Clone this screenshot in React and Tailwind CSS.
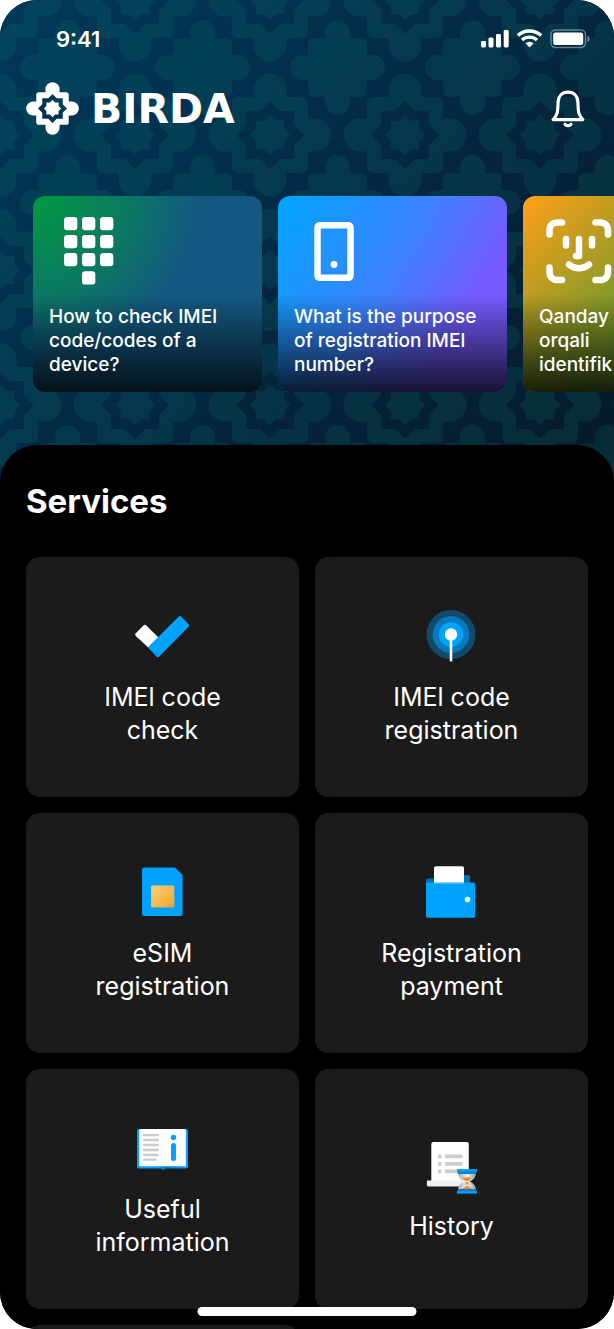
import React from 'react';

const lobedCross = (half, reach, lobe, r) => (
  <>
    <rect x={-half} y={-half} width={half * 2} height={half * 2} rx={r} />
    <rect x={-lobe} y={-reach} width={lobe * 2} height={reach * 2} rx={lobe} />
    <rect x={-reach} y={-lobe} width={reach * 2} height={lobe * 2} rx={lobe} />
  </>
);

const star = (half) => {
  const tip = half * Math.SQRT2;
  const inner = half * (Math.SQRT2 - 1);
  const pts = [
    [0, -tip], [inner, -half], [half, -half], [half, -inner],
    [tip, 0], [half, inner], [half, half], [inner, half],
    [0, tip], [-inner, half], [-half, half], [-half, inner],
    [-tip, 0], [-half, -inner], [-half, -half], [-inner, -half],
  ];
  return `M${pts.map((p) => p.join(' ')).join('L')}Z`;
};

// White ornament with the star cut out of the middle
const Ornament = ({ id }) => (
  <>
    <mask id={id} maskUnits="userSpaceOnUse" x="-64" y="-64" width="128" height="128">
      <g fill="#fff">{lobedCross(38, 61.5, 16.5, 6)}</g>
      <path d={star(24)} fill="#000" />
      <path d={star(14.3)} fill="#fff" />
    </mask>
    <rect x="-64" y="-64" width="128" height="128" mask={`url(#${id})`} />
  </>
);

const HeaderPattern = () => (
  <svg className="absolute inset-0 h-full w-full" aria-hidden="true">
    <defs>
      <pattern id="tiles" width="135" height="135" patternUnits="userSpaceOnUse">
        <g fill="#fff">
          <g transform="translate(67.5 67.5)">{lobedCross(29.3, 47.5, 12.5, 5)}</g>
          {[[0, 0], [135, 0], [0, 135], [135, 135]].map(([x, y]) => (
            <g key={`${x}-${y}`} transform={`translate(${x} ${y})`}>
              <Ornament id={`tile-${x}-${y}`} />
            </g>
          ))}
        </g>
      </pattern>
      <mask id="tiles-mask">
        <rect width="100%" height="100%" fill="url(#tiles)" />
      </mask>
    </defs>
    <rect width="100%" height="100%" fill="#109680" opacity="0.14" mask="url(#tiles-mask)" />
  </svg>
);

const StatusIcons = () => (
  <svg width="110" height="20" viewBox="0 0 110 20" fill="#fff" aria-hidden="true">
    <rect x="1" y="12" width="5" height="6.5" rx="1.4" />
    <rect x="8.5" y="8.5" width="5" height="10" rx="1.4" />
    <rect x="16" y="5" width="5" height="13.5" rx="1.4" />
    <rect x="23.7" y="1" width="5" height="17.5" rx="1.4" />
    <g fill="none" stroke="#fff" strokeWidth="3.4">
      <path d="M37.9 6.6a17 17 0 0 1 23.2 0" />
      <path d="M42 11.1a11 11 0 0 1 15 0" />
    </g>
    <path d="M45.4 14.3a6 6 0 0 1 8.2 0l-4.1 4.2z" />
    <rect x="71" y="1" width="34.5" height="17.5" rx="4.5" fill="none" stroke="#fff" strokeOpacity="0.4" strokeWidth="1.4" />
    <rect x="73.2" y="3.4" width="30" height="12.6" rx="2.5" />
    <path d="M107.5 7v6c1.6-.7 2-1.7 2-3s-.4-2.3-2-3z" opacity="0.45" />
  </svg>
);

const BellIcon = () => (
  <svg width="34" height="38" viewBox="0 0 34 38" fill="none" stroke="#fff" strokeWidth="3.2" strokeLinecap="round" strokeLinejoin="round" aria-hidden="true">
    <path d="M17 2.2C10.600 2.2 7.300 6.700 7.100 12L6.700 19.500c-.2 4-1.700 7.100-4.500 10.100h29.600c-2.800-3-4.300-6.100-4.500-10.100L26.900 12c-.2-5.300-3.500-9.800-9.900-9.800z" />
    <path d="M14 34.200c1.500 2 4.500 2 6 0" />
  </svg>
);

const KeypadIcon = () => (
  <svg width="84" height="70" viewBox="0 0 84 70" fill="#fff" aria-hidden="true">
    {[0, 18, 36].map((y) => [15, 33, 51].map((x) => (
      <rect key={`${x}-${y}`} x={x} y={y} width="13.3" height="13.3" rx="3.2" />
    )))}
    <rect x="33" y="54.3" width="13.3" height="13.3" rx="3.2" />
  </svg>
);

const PhoneIcon = () => (
  <svg width="84" height="70" viewBox="0 0 84 70" aria-hidden="true">
    <rect x="23.5" y="8.3" width="33" height="52.5" rx="2" fill="none" stroke="#fff" strokeWidth="6.5" />
    <circle cx="40" cy="47.5" r="3.4" fill="#fff" />
  </svg>
);

const FaceIcon = () => (
  <svg width="84" height="70" viewBox="0 0 84 70" fill="none" stroke="#fff" strokeWidth="6.5" strokeLinecap="round" strokeLinejoin="round" aria-hidden="true">
    <path d="M10.5 17.5V13.500c0-5 3-8 8-8h4.500M56.500 5.500h4.500c5 0 8 3 8 8v4M69 50.500v4.500c0 5-3 8-8 8h-4.500M23 63h-4.500c-5 0-8-3-8-8v-4.500" />
    <path d="M27 22v6.5M53 22v6.500M40 22v17h-3M30 47.500c6 5 14 5 20 0" />
  </svg>
);

const CheckIcon = () => (
  <svg width="58" height="58" viewBox="1 0 58 58" aria-hidden="true">
    <path d="M2.8 26.2l7.7-7.7a2 2 0 0 1 2.8 0L26 31 18 43 2.8 29a2 2 0 0 1 0-2.8z" fill="#fff" />
    <path d="M14.9 40.300l30.600-30.600a2 2 0 0 1 2.800 0l7.200 7.200a2 2 0 0 1 0 2.800L26.200 49.500a2 2 0 0 1-2.800 0z" fill="#00a2ff" />
  </svg>
);

const SignalIcon = () => (
  <svg width="58" height="58" viewBox="1 0 58 58" fill="#00a2ff" aria-hidden="true">
    <circle cx="29" cy="27.5" r="24.5" opacity="0.35" />
    <circle cx="29" cy="27.5" r="18.3" opacity="0.55" />
    <circle cx="29" cy="27.5" r="12.2" />
    <circle cx="29" cy="27.5" r="6.2" fill="#fff" />
    <rect x="27.7" y="30" width="2.6" height="24.5" rx="1" fill="#fff" />
  </svg>
);

const SimIcon = () => (
  <svg width="58" height="58" viewBox="1 0 58 58" aria-hidden="true">
    <defs>
      <linearGradient id="chip" x1="0" y1="0" x2="1" y2="1">
        <stop offset="0" stopColor="#ffd079" />
        <stop offset="1" stopColor="#eaa829" />
      </linearGradient>
    </defs>
    <path d="M11 4.5h31l7.5 7.3V51a2 2 0 0 1-2 2H11a2 2 0 0 1-2-2V6.5a2 2 0 0 1 2-2z" fill="#00a2ff" />
    <rect x="18" y="22.5" width="23.3" height="22" rx="1.5" fill="url(#chip)" />
  </svg>
);

const WalletIcon = () => (
  <svg width="58" height="58" viewBox="1 0 58 58" aria-hidden="true">
    <path d="M4 22v-4.5a2 2 0 0 1 2-2h34V14a2 2 0 0 1 2-2h4.500a1.500 1.500 0 0 1 1.500 1.500V22z" fill="#0072b3" />
    <path d="M12 22V5a1.8 1.8 0 0 1 1.8-1.8h26.400A1.800 1.800 0 0 1 42 5v17z" fill="#fff" />
    <path d="M4 19.5h47.500A1.700 1.700 0 0 1 53.200 21.200V53a1.700 1.700 0 0 1-1.700 1.700H6A2 2 0 0 1 4 53z" fill="#00a2ff" />
    <path d="M12 19.5h30v1H12z" fill="#8fd4ff" />
    <circle cx="45.500" cy="36.5" r="2.7" fill="#fff" />
  </svg>
);

const BookIcon = () => (
  <svg width="58" height="58" viewBox="0 -1 58 58" aria-hidden="true">
    <defs>
      <linearGradient id="cover">
        <stop offset="0.45" stopColor="#00a2ff" />
        <stop offset="0.55" stopColor="#0080c9" />
        <stop offset="1" stopColor="#00a2ff" />
      </linearGradient>
    </defs>
    <path d="M5 9h47a2 2 0 0 1 2 2v35.500a2 2 0 0 1-2 2H32c-.8 1.300-4.200 1.300-5 0H5a2 2 0 0 1-2-2V11a2 2 0 0 1 2-2z" fill="url(#cover)" />
    <path d="M5.200 10.500c0-.8.600-1.500 1.500-1.500h43.700c.9 0 1.500.7 1.500 1.500v35.700H5.200z" fill="#fff" />
    <g fill="none" stroke="#ccc" strokeWidth="2.3" strokeLinecap="round">
      <path d="M10 15.200h14M10 20h14M10 25h14M10 30h14M10 35h14M10 39.700h11.500" />
    </g>
    <circle cx="39.500" cy="17.500" r="2.700" fill="#00a2ff" />
    <path d="M39.500 25.500v13" stroke="#00a2ff" strokeWidth="5" strokeLinecap="round" />
  </svg>
);

const HistoryIcon = () => (
  <svg width="58" height="58" viewBox="1 -2 58 58" aria-hidden="true">
    <defs>
      <linearGradient id="glass">
        <stop offset="0" stopColor="#a9a9a9" />
        <stop offset="0.5" stopColor="#f2f2f2" />
        <stop offset="1" stopColor="#9c9c9c" />
      </linearGradient>
    </defs>
    <rect x="9.300" y="4" width="37.500" height="43" rx="2" fill="#fff" />
    <path d="M5 42.500h36V48.500H6.500A1.800 1.800 0 0 1 4.800 46.700z" fill="#f0f0f0" />
    <path d="M16 16.500h3.500v3.800H16zM23 16.500h17.500v3.800H23zM16 24h3.500v3.800H16zM23 24h17.500v3.800H23zM16 31.500h3.500v3.800H16zM23 31.500h13v3.800H23z" fill="#ccc" />
    <path d="M36 34.500h18c0 4-1.800 7-6.300 9 4.500 2 6.300 5 6.300 9H36c0-4 1.800-7 6.300-9-4.500-2-6.300-5-6.300-9z" fill="url(#glass)" />
    <path d="M40 39.500h10l-3.500 3.500h-3zM43.700 44h2.600v2.500h-2.600zM45 47.500l5 3.500H40z" fill="#f08a24" />
    <path d="M35 31.500h20v2l-1.500 2.500h-17L35 33.500zM36.500 51h17l1.500 2.300v2H35v-2z" fill="#0080d0" />
    <path d="M35 31.300h20v2.300H35zM35 53.200h20v2.200H35z" fill="#00a2ff" />
  </svg>
);

const stories = [
  {
    text: 'How to check IMEl code/codes of a device?',
    icon: <KeypadIcon />,
    bg: 'bg-[radial-gradient(circle_at_top_left,#009a40_0%,#0b7862_32%,#145881_54%)]',
  },
  {
    text: 'What is the purpose of registration IMEl number?',
    icon: <PhoneIcon />,
    bg: 'bg-[linear-gradient(120deg,#00a5ff_0%,#3b83ff_45%,#755aff_75%)]',
  },
  {
    text: 'Qanday\norqali\nidentifik',
    icon: <FaceIcon />,
    bg: 'bg-[linear-gradient(135deg,#ffa01a_0%,#869a28_45%,#3f8f35_100%)]',
  },
];

const services = [
  { lines: ['IMEl code', 'check'], icon: <CheckIcon /> },
  { lines: ['IMEl code', 'registration'], icon: <SignalIcon /> },
  { lines: ['eSIM', 'registration'], icon: <SimIcon /> },
  { lines: ['Registration', 'payment'], icon: <WalletIcon /> },
  { lines: ['Useful', 'information'], icon: <BookIcon /> },
  { lines: ['History'], icon: <HistoryIcon /> },
  { lines: [], icon: null },
];

const StoryCard = ({ text, icon, bg }) => (
  <button
    type="button"
    className={`flex h-[196px] w-[229px] shrink-0 flex-col overflow-hidden rounded-xl text-left ${bg}`}
  >
    <span className="flex w-full flex-1 flex-col justify-between bg-linear-to-b from-transparent from-50% to-black/80 px-4 pt-[21px] pb-[15px]">
      {icon}
      <span className="text-[19px] leading-6 font-medium whitespace-pre-line">{text}</span>
    </span>
  </button>
);

const ServiceCard = ({ lines, icon }) => (
  <button
    type="button"
    className="flex h-60 flex-col items-center justify-center gap-4 rounded-[14px] bg-[#1b1b1b]"
  >
    {icon}
    <span className="text-[25px] leading-[33px]">
      {lines.map((line) => (
        <span key={line} className="block">{line}</span>
      ))}
    </span>
  </button>
);

const App = () => {
  return (
    <div className="h-screen bg-white">
      <div className="relative flex h-full flex-col overflow-hidden rounded-[37px] bg-black font-['Inter',sans-serif] text-white">
        <header className="relative shrink-0 bg-[linear-gradient(135deg,#003858_0%,#02304e_30%,#04243c_60%,#061a2a_100%)] pb-[89px]">
          <HeaderPattern />
          <div className="relative">
            <div className="flex items-center justify-between pt-6 pr-6 pl-14">
              <span className="text-[22px] leading-[30px] font-semibold">9:41</span>
              <StatusIcons />
            </div>

            <div className="flex items-center justify-between pt-7 pr-[29px] pl-[26px]">
              <h1 className="flex items-center gap-3 font-['DejaVu_Sans',sans-serif] text-[41px] leading-[52px] font-bold">
                <svg width="53" height="53" viewBox="-62 -62 124 124" fill="#fff" aria-hidden="true">
                  <Ornament id="logo" />
                </svg>
                BIRDA
              </h1>
              <button type="button" aria-label="Notifications">
                <BellIcon />
              </button>
            </div>

            <div className="flex gap-4 overflow-hidden pt-[61px] pl-[33px]">
              {stories.map((story) => (
                <StoryCard key={story.text} {...story} />
              ))}
            </div>
          </div>
        </header>

        <main className="relative -mt-9 shrink-0 rounded-t-[37px] bg-black px-[26px] pt-9">
          <h2 className="text-[33px] leading-10 font-bold">Services</h2>
          <div className="grid grid-cols-2 gap-4 pt-9">
            {services.map((service, idx) => (
              <ServiceCard key={idx} {...service} />
            ))}
          </div>
        </main>

        <div className="absolute bottom-[13px] left-1/2 h-[9px] w-[219px] -translate-x-1/2 rounded-full bg-white" />
      </div>
    </div>
  );
};

export default App;
